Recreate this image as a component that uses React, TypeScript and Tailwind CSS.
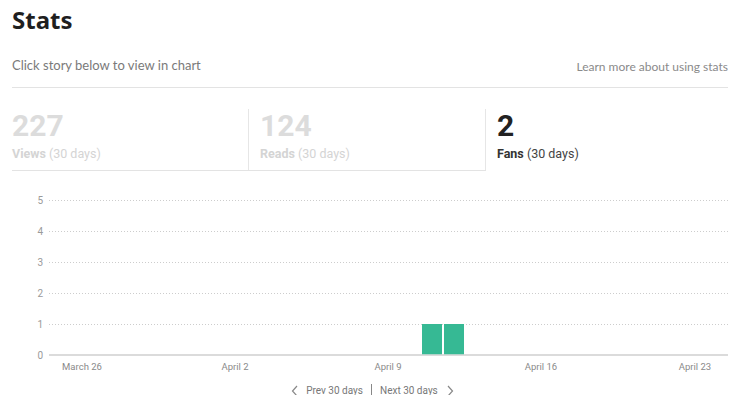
import React from 'react';

const TABS = [
  { value: '227', label: 'Views', active: false },
  { value: '124', label: 'Reads', active: false },
  { value: '2', label: 'Fans', active: true },
];

const Y_TICKS = [5, 4, 3, 2, 1, 0];
const X_LABELS = [
  { x: 82, text: 'March 26' },
  { x: 235, text: 'April 2' },
  { x: 388, text: 'April 9' },
  { x: 541, text: 'April 16' },
  { x: 695, text: 'April 23' },
];
const BARS = [422, 444];

function Chart() {
  const top = 15;
  const step = 31;
  return (
    <svg width={747} height={190} className="block" style={{ fontFamily: 'Roboto, sans-serif' }}>
      {Y_TICKS.map((t, i) => {
        const y = top + i * step;
        return (
          <g key={t}>
            <text x={43} y={y + 3.5} fontSize={10} fill="#9a9a9a" textAnchor="end">
              {t}
            </text>
            {t === 0 ? (
              <line x1={49} x2={728} y1={y} y2={y} stroke="#cfcfcf" strokeWidth={1.5} />
            ) : (
              <line x1={49} x2={728} y1={y + 0.5} y2={y + 0.5} stroke="#cdcdcd" strokeWidth={1} strokeDasharray="1 2" />
            )}
          </g>
        );
      })}
      {BARS.map(x => (
        <rect key={x} x={x} y={top + 4 * step} width={20} height={step - 0.75} fill="#36b994" />
      ))}
      {X_LABELS.map(l => (
        <text key={l.text} x={l.x} y={185} fontSize={9.5} fill="#8a8a8a" textAnchor="middle">
          {l.text}
        </text>
      ))}
    </svg>
  );
}

export default function App() {
  return (
    <div className="w-[747px] h-[395px] bg-white overflow-hidden" style={{ fontFamily: 'Lato, sans-serif' }}>
      <div className="pl-3 pr-[19px]">
        <h1 className="text-[24px] leading-[32px] pt-[4px] font-bold text-[#1f1f1f]" style={{ fontFamily: '"Noto Sans", sans-serif' }}>
          Stats
        </h1>

        {/* Header row */}
        <div className="flex items-end justify-between mt-[20px] pb-[13px] border-b border-[#e3e3e3]">
          <span className="text-[13px] leading-[18px] text-[#7a7a7a]">Click story below to view in chart</span>
          <span className="text-[12px] leading-[16px] text-[#8a8a8a] mb-[-1px]">Learn more about using stats</span>
        </div>

        {/* Tabs */}
        <div className="flex" style={{ fontFamily: 'Roboto, sans-serif' }}>
          {TABS.map((t, i) => (
            <div
              key={t.label}
              className={`pt-[21px] pb-[7px] ${i === 0 ? 'w-[237px]' : i === 1 ? 'w-[237px] pl-[11px]' : 'flex-1 pl-[11px]'} ${t.active ? '' : 'border-b border-[#e3e3e3]'} ${i < 2 ? 'relative' : ''}`}
            >
              {i < 2 && <span className="absolute right-0 top-[21px] bottom-0 w-px bg-[#e6e6e6]" />}
              <div className={`text-[30px] leading-[34px] font-bold ${t.active ? 'text-[#222]' : 'text-[#dcdcdc]'}`}>
                {t.value}
              </div>
              <div className={`text-[12.5px] leading-[18px] mt-[2px] ${t.active ? 'text-[#444]' : 'text-[#d4d4d4]'}`}>
                <span className={`font-bold ${t.active ? 'text-[#333]' : ''}`}>{t.label}</span> (30 days)
              </div>
            </div>
          ))}
        </div>
      </div>

      <div className="mt-[14px]">
        <Chart />
      </div>

      {/* Nav */}
      <div className="flex items-center justify-center text-[10px] leading-[16px] text-[#777] mt-[8px] pr-[2px]" style={{ fontFamily: 'Roboto, sans-serif' }}>
        <svg width="8" height="12" viewBox="0 0 8 12" className="mr-[7px]">
          <path d="M6 1 L1.5 6 L6 11" fill="none" stroke="#888" strokeWidth="1.2" />
        </svg>
        <span>Prev 30 days</span>
        <span className="w-px h-[15px] bg-[#888] mx-[8px]" />
        <span>Next 30 days</span>
        <svg width="8" height="12" viewBox="0 0 8 12" className="ml-[8px]">
          <path d="M2 1 L6.5 6 L2 11" fill="none" stroke="#888" strokeWidth="1.2" />
        </svg>
      </div>
    </div>
  );
}
